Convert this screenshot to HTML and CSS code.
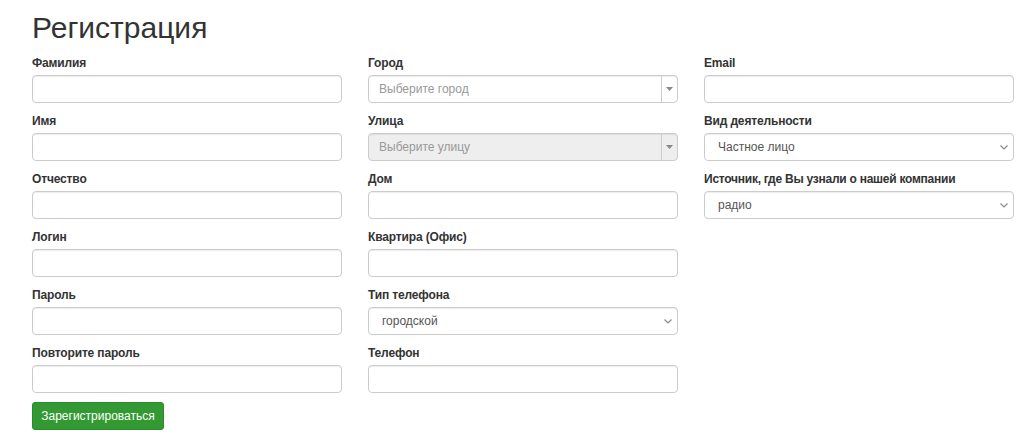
FILE: index.html
```html
<!DOCTYPE html>
<html lang="ru">
<head>
<meta charset="utf-8">
<title>Регистрация</title>
<link rel="stylesheet" href="styles.css">
</head>
<body>
<div class="page">
  <h1 class="title">Регистрация</h1>
  <form class="form">
    <div class="col">
      <div class="group"><label class="lbl">Фамилия</label><input class="ctl" type="text"></div>
      <div class="group"><label class="lbl">Имя</label><input class="ctl" type="text"></div>
      <div class="group"><label class="lbl">Отчество</label><input class="ctl" type="text"></div>
      <div class="group"><label class="lbl">Логин</label><input class="ctl" type="text"></div>
      <div class="group"><label class="lbl">Пароль</label><input class="ctl" type="password"></div>
      <div class="group"><label class="lbl">Повторите пароль</label><input class="ctl" type="password"></div>
      <button class="btn" type="button">Зарегистрироваться</button>
    </div>
    <div class="col">
      <div class="group"><label class="lbl">Город</label>
        <div class="chosen"><span class="chosen-text">Выберите город</span><span class="chosen-arrow"><svg width="7" height="4" viewBox="0 0 7 4"><path d="M0 0H7L3.5 4Z" fill="#888"/></svg></span></div>
      </div>
      <div class="group"><label class="lbl">Улица</label>
        <div class="chosen disabled"><span class="chosen-text">Выберите улицу</span><span class="chosen-arrow"><svg width="7" height="4" viewBox="0 0 7 4"><path d="M0 0H7L3.5 4Z" fill="#888"/></svg></span></div>
      </div>
      <div class="group"><label class="lbl">Дом</label><input class="ctl" type="text"></div>
      <div class="group"><label class="lbl">Квартира (Офис)</label><input class="ctl" type="text"></div>
      <div class="group"><label class="lbl">Тип телефона</label>
        <div class="sel-wrap">
          <select class="ctl sel"><option>городской</option><option>мобильный</option></select>
          <svg class="chev" width="8" height="5" viewBox="0 0 8 5"><path d="M0.5 0.5L4 4L7.5 0.5" fill="none" stroke="#8a8a8a" stroke-width="1.2"/></svg>
        </div>
      </div>
      <div class="group"><label class="lbl">Телефон</label><input class="ctl" type="text"></div>
    </div>
    <div class="col">
      <div class="group"><label class="lbl">Email</label><input class="ctl" type="text"></div>
      <div class="group"><label class="lbl">Вид деятельности</label>
        <div class="sel-wrap">
          <select class="ctl sel"><option>Частное лицо</option><option>Организация</option></select>
          <svg class="chev" width="8" height="5" viewBox="0 0 8 5"><path d="M0.5 0.5L4 4L7.5 0.5" fill="none" stroke="#8a8a8a" stroke-width="1.2"/></svg>
        </div>
      </div>
      <div class="group"><label class="lbl lbl-long">Источник, где Вы узнали о нашей компании</label>
        <div class="sel-wrap">
          <select class="ctl sel"><option>радио</option><option>интернет</option></select>
          <svg class="chev" width="8" height="5" viewBox="0 0 8 5"><path d="M0.5 0.5L4 4L7.5 0.5" fill="none" stroke="#8a8a8a" stroke-width="1.2"/></svg>
        </div>
      </div>
    </div>
  </form>
</div>
</body>
</html>
```
FILE: styles.css
```css
* { box-sizing: border-box; }
html, body { margin: 0; padding: 0; background: #fff; }
body {
  font-family: "Liberation Sans", Arial, sans-serif;
  font-size: 12px;
  color: #333;
}
.page { padding: 11px 10px 0 32px; }
.title {
  margin: 0 0 11px;
  font-size: 30px;
  line-height: 33px;
  font-weight: 400;
  color: #333;
}
.form {
  display: grid;
  grid-template-columns: 310px 310px 310px;
  column-gap: 26px;
  align-items: start;
}
.col { display: flex; flex-direction: column; }
.group { display: flex; flex-direction: column; margin-bottom: 10px; }
.lbl {
  font-weight: 700;
  font-size: 12px;
  line-height: 16px;
  margin-bottom: 4px;
  color: #333;
  letter-spacing: -0.15px;
  white-space: nowrap;
}
.lbl-long { letter-spacing: -0.25px; }
.ctl {
  height: 28px;
  width: 100%;
  margin: 0;
  border: 1px solid #ccc;
  border-radius: 4px;
  background: #fff;
  box-shadow: inset 0 1px 1px rgba(0,0,0,.075);
  font-family: "Liberation Sans", Arial, sans-serif;
  font-size: 12px;
  color: #555;
  padding: 0 10px;
  outline: none;
}
.sel-wrap { position: relative; }
.sel {
  -webkit-appearance: none;
  appearance: none;
  padding: 0 24px 0 13px;
  display: block;
}
.chev {
  position: absolute;
  right: 6px;
  top: 12px;
  pointer-events: none;
}
.chosen {
  height: 28px;
  display: flex;
  align-items: stretch;
  border: 1px solid #ccc;
  border-radius: 4px;
  background: #fff;
  box-shadow: inset 0 1px 1px rgba(0,0,0,.075);
}
.chosen.disabled { background: #eee; }
.chosen-text {
  flex: 1;
  display: flex;
  align-items: center;
  padding-left: 10px;
  color: #999;
  font-size: 12px;
}
.chosen-arrow {
  width: 16px;
  border-left: 1px solid #ccc;
  display: flex;
  align-items: center;
  justify-content: center;
}
.btn {
  align-self: flex-start;
  width: 132px;
  height: 28px;
  margin-top: -1px;
  border: 1px solid #2a8a2f;
  border-radius: 3px;
  background: #339933;
  color: #fff;
  font-family: "Liberation Sans", Arial, sans-serif;
  font-size: 12px;
  padding: 0;
}
```
